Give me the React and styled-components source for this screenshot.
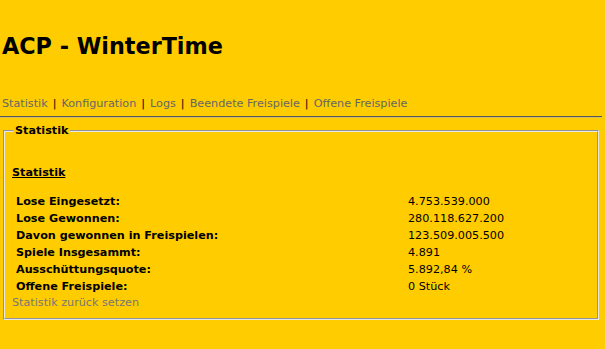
import React from "react";
import styled, { createGlobalStyle } from "styled-components";

const GlobalStyle = createGlobalStyle`
  html, body {
    margin: 0;
    padding: 0;
    background: #ffcc00;
  }
  body {
    font-family: "DejaVu Sans", Verdana, sans-serif;
    font-size: 11.2px;
    color: #000;
  }
`;

const Page = styled.div`
  width: 602px;
`;

const Title = styled.h1`
  margin: 0;
  padding: 30px 0 0 2px;
  font-size: 22.3px;
  line-height: 32px;
  font-weight: bold;
`;

const Nav = styled.div`
  margin-top: 35px;
  padding-left: 2px;
  line-height: 14px;
  color: #000;
`;

const NavLink = styled.a`
  color: #666;
  text-decoration: none;
`;

const Sep = styled.span`
  margin: 0 5px;
`;

const Rule = styled.hr`
  margin: 5px 0 0;
  border: 0;
  border-top: 1px solid #555;
  border-bottom: 1px solid #d8c060;
  height: 0;
`;

const Box = styled.fieldset`
  margin: 6px 3px 0;
  padding: 0 7px 8px;
  border: 2px groove #e8e8e8;
`;

const Legend = styled.legend`
  padding: 0 2px;
  margin-left: 1px;
  font-weight: bold;
`;

const Heading = styled.div`
  margin-top: 29px;
  font-weight: bold;
  text-decoration: underline;
  line-height: 14px;
`;

const Table = styled.table`
  margin-top: 12px;
  border-collapse: separate;
  border-spacing: 2px;
`;

const Label = styled.td`
  width: 386px;
  padding: 1px 2px;
  line-height: 13px;
  font-weight: bold;
`;

const Value = styled.td`
  padding: 1px 2px;
  line-height: 13px;
`;

const ResetLink = styled.a`
  display: block;
  line-height: 14px;
  color: #777;
  text-decoration: none;
`;

const links = ["Statistik", "Konfiguration", "Logs", "Beendete Freispiele", "Offene Freispiele"];

const rows = [
  ["Lose Eingesetzt:", "4.753.539.000"],
  ["Lose Gewonnen:", "280.118.627.200"],
  ["Davon gewonnen in Freispielen:", "123.509.005.500"],
  ["Spiele Insgesammt:", "4.891"],
  ["Ausschüttungsquote:", "5.892,84 %"],
  ["Offene Freispiele:", "0 Stück"],
];

export default function App() {
  return (
    <Page>
      <GlobalStyle />
      <Title>ACP - WinterTime</Title>
      <Nav>
        {links.map((l, i) => (
          <React.Fragment key={l}>
            {i > 0 && <Sep>|</Sep>}
            <NavLink href="#">{l}</NavLink>
          </React.Fragment>
        ))}
      </Nav>
      <Rule />
      <Box>
        <Legend>Statistik</Legend>
        <Heading>Statistik</Heading>
        <Table>
          <tbody>
            {rows.map(([k, v]) => (
              <tr key={k}>
                <Label>{k}</Label>
                <Value>{v}</Value>
              </tr>
            ))}
          </tbody>
        </Table>
        <ResetLink href="#">Statistik zurück setzen</ResetLink>
      </Box>
    </Page>
  );
}
